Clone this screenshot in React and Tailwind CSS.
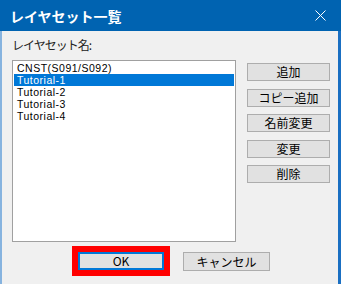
const layers = ["CNST(S091/S092)", "Tutorial-1", "Tutorial-2", "Tutorial-3", "Tutorial-4"];
const actions = [
  { label: "追加", mt: "mt-[3px]" },
  { label: "コピー追加", mt: "mt-[8px]" },
  { label: "名前変更", mt: "mt-[7px]" },
  { label: "変更", mt: "mt-[8px]" },
  { label: "削除", mt: "mt-[7px]" },
];

function WinButton({ children, className = "" }) {
  return (
    <button className={"flex items-center justify-center bg-[#e1e1e1] border border-[#adadad] text-[12px] leading-none text-black " + className}>
      {children}
    </button>
  );
}

export default function App() {
  return (
    <div className="w-[341px] h-[284px] flex flex-col bg-[#f0f0f0] font-['Noto_Sans_CJK_JP',sans-serif] overflow-hidden">
      <div className="h-[31px] shrink-0 bg-[#0063b1] flex items-center justify-between pl-[10px] pr-[15px]">
        <span className="text-white font-bold text-[14px] leading-none">レイヤセット一覧</span>
        <svg width="11" height="11" viewBox="0 0 11 11" className="stroke-white">
          <path d="M0.5 0.5L10.5 10.5M10.5 0.5L0.5 10.5" strokeWidth="1" />
        </svg>
      </div>

      <div className="flex-1 flex flex-col border-l-2 border-l-[#86b3df] border-r-[3px] border-r-[#1a6fc2] pl-[10px]">
        <div className="mt-[7px] h-[14px] leading-[14px] text-[12px] text-[#222] tracking-[-1px]">レイヤセット名:</div>

        <div className="mt-[8px] flex">
          <div className="w-[224px] h-[182px] bg-white border border-[#a0a0a0] p-px">
            {layers.map((name, i) => (
              <div
                key={name}
                className={
                  "h-[12px] leading-[12px] pl-[3px] font-['Liberation_Sans',Arial,sans-serif] text-[10.5px] tracking-[0.5px] " +
                  (i === 1 ? "bg-[#0078d7] text-white" : "text-black")
                }
              >
                {name}
              </div>
            ))}
          </div>

          <div className="ml-[11px] flex flex-col">
            {actions.map((a) => (
              <WinButton key={a.label} className={"w-[83px] h-[18px] " + a.mt}>
                {a.label}
              </WinButton>
            ))}
          </div>
        </div>

        <div className="mt-[10px] flex items-start pl-[66px]">
          <button className="w-[86px] h-[18px] flex items-center justify-center bg-[#e1e1e1] border-2 border-[#0078d7] text-[12px] leading-none text-black outline-[6px] outline-solid outline-[#ff0000]">
            OK
          </button>
          <WinButton className="ml-[19px] w-[87px] h-[19px]">キャンセル</WinButton>
        </div>
      </div>
    </div>
  );
}
